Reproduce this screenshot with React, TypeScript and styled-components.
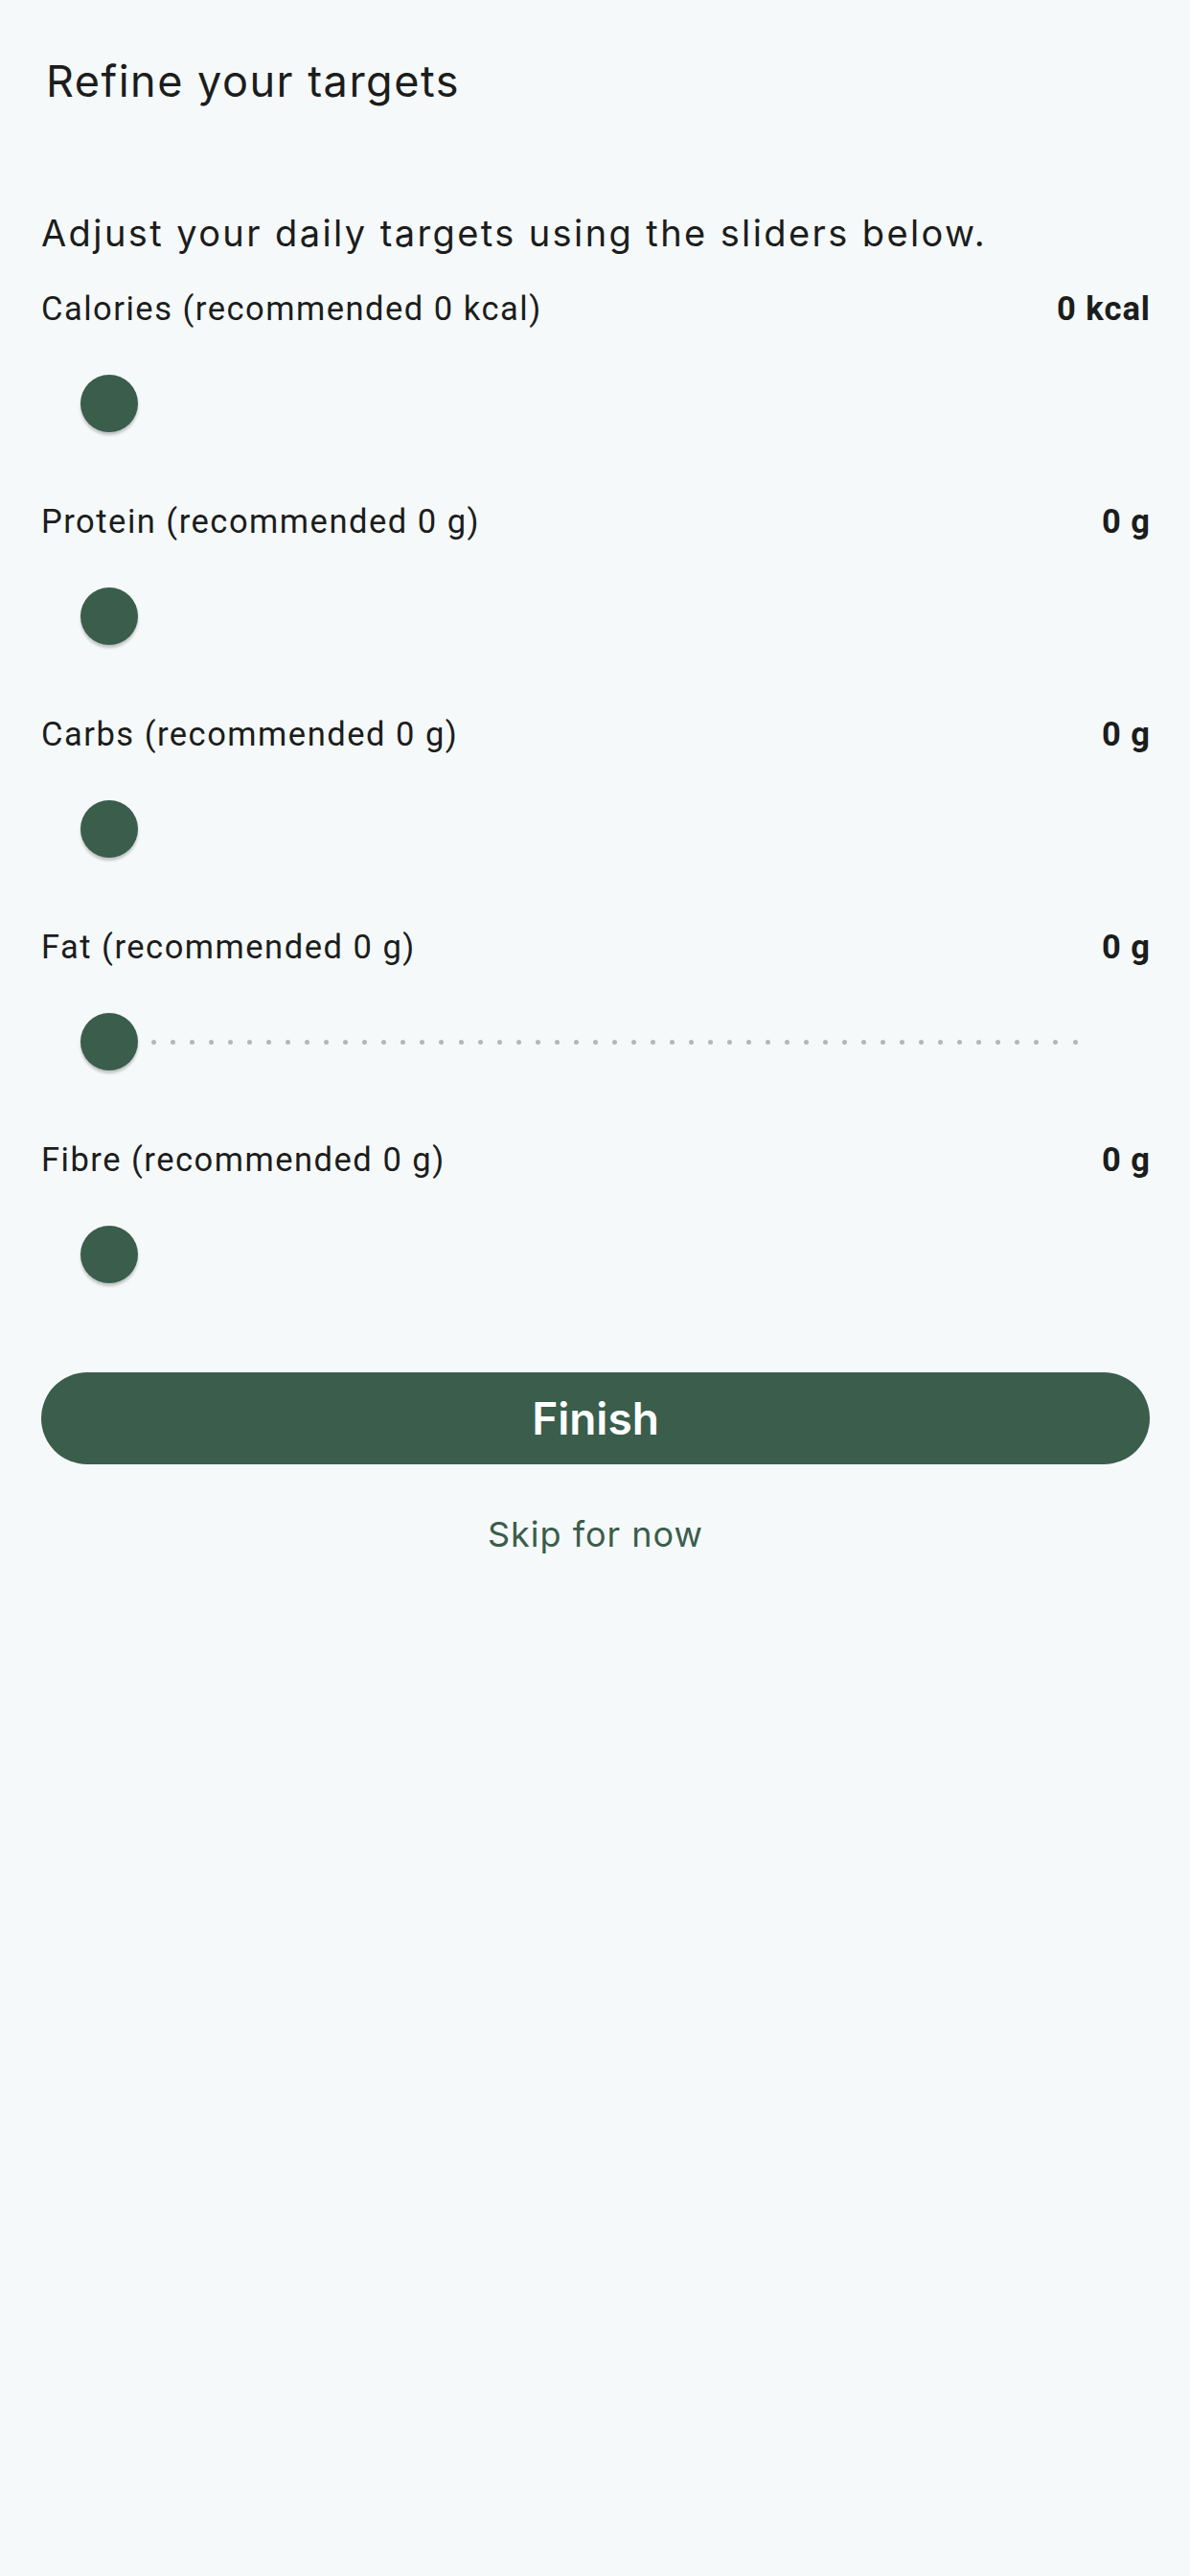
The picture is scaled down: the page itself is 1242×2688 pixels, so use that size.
import React from "react";
import styled, { createGlobalStyle } from "styled-components";

const GlobalStyle = createGlobalStyle`
  html, body {
    margin: 0;
    padding: 0;
    background: #f6f9f9;
  }
`;

const Page = styled.div`
  min-height: 2688px;
  background: #f6f9f9;
  padding: 57px 42px 0 43px;
  box-sizing: border-box;
  display: flex;
  flex-direction: column;
  color: #1b1d1d;
`;

const Title = styled.h1`
  margin: 0 0 106px 5px;
  font-family: Inter, "Noto Sans", sans-serif;
  font-size: 45px;
  font-weight: 400;
  letter-spacing: 1.5px;
  line-height: 56px;
`;

const Intro = styled.p`
  margin: 0 0 31px 0;
  font-family: Inter, "Noto Sans", sans-serif;
  font-size: 38px;
  font-weight: 400;
  letter-spacing: 2.4px;
  line-height: 48px;
`;

const SliderList = styled.div`
  display: flex;
  flex-direction: column;
  gap: 24px;
`;

const Row = styled.div`
  display: flex;
  flex-direction: column;
`;

const LabelRow = styled.div`
  display: flex;
  justify-content: space-between;
  align-items: center;
  height: 48px;
  font-family: Roboto, "Liberation Sans", sans-serif;
  font-size: 34.5px;
  letter-spacing: 1.5px;
`;

const Label = styled.span`
  font-weight: 400;
`;

const Value = styled.span`
  font-weight: 700;
  letter-spacing: 1px;
  margin-right: -1px;
`;

const Track = styled.div`
  position: relative;
  height: 150px;
  display: flex;
  align-items: center;
  padding: 0 75px 0 41px;
`;

const Ticks = styled.div`
  flex: 1;
  display: flex;
  justify-content: space-between;
  padding-left: 74px;
`;

const Tick = styled.span`
  width: 5px;
  height: 5px;
  border-radius: 50%;
  background: #b3b8b7;
`;

const Thumb = styled.div`
  position: absolute;
  left: 41px;
  top: 45px;
  width: 60px;
  height: 60px;
  border-radius: 50%;
  background: #3a5d4c;
  box-shadow: 0 3px 3px rgba(0, 0, 0, 0.22);
`;

const FinishButton = styled.button`
  margin-top: 48px;
  height: 96px;
  border: none;
  border-radius: 48px;
  background: #3a5d4c;
  color: #ffffff;
  font-family: Inter, "Noto Sans", sans-serif;
  font-size: 46px;
  font-weight: 600;
`;

const SkipButton = styled.button`
  margin-top: 49px;
  align-self: center;
  background: none;
  border: none;
  height: 48px;
  color: #3a5d4c;
  font-family: Inter, "Noto Sans", sans-serif;
  font-size: 36px;
  font-weight: 400;
  letter-spacing: 1px;
`;

type Target = {
  label: string;
  value: string;
  ticks: number;
};

const targets: Target[] = [
  { label: "Calories (recommended 0 kcal)", value: "0 kcal", ticks: 0 },
  { label: "Protein (recommended 0 g)", value: "0 g", ticks: 0 },
  { label: "Carbs (recommended 0 g)", value: "0 g", ticks: 0 },
  { label: "Fat (recommended 0 g)", value: "0 g", ticks: 49 },
  { label: "Fibre (recommended 0 g)", value: "0 g", ticks: 0 },
];

const App: React.FC = () => {
  return (
    <>
      <GlobalStyle />
      <Page>
        <Title>Refine your targets</Title>
        <Intro>Adjust your daily targets using the sliders below.</Intro>
        <SliderList>
          {targets.map((target) => (
            <Row key={target.label}>
              <LabelRow>
                <Label>{target.label}</Label>
                <Value>{target.value}</Value>
              </LabelRow>
              <Track>
                {target.ticks > 0 && (
                  <Ticks>
                    {Array.from({ length: target.ticks }).map((_, i) => (
                      <Tick key={i} />
                    ))}
                  </Ticks>
                )}
                <Thumb />
              </Track>
            </Row>
          ))}
        </SliderList>
        <FinishButton>Finish</FinishButton>
        <SkipButton>Skip for now</SkipButton>
      </Page>
    </>
  );
};

export default App;
